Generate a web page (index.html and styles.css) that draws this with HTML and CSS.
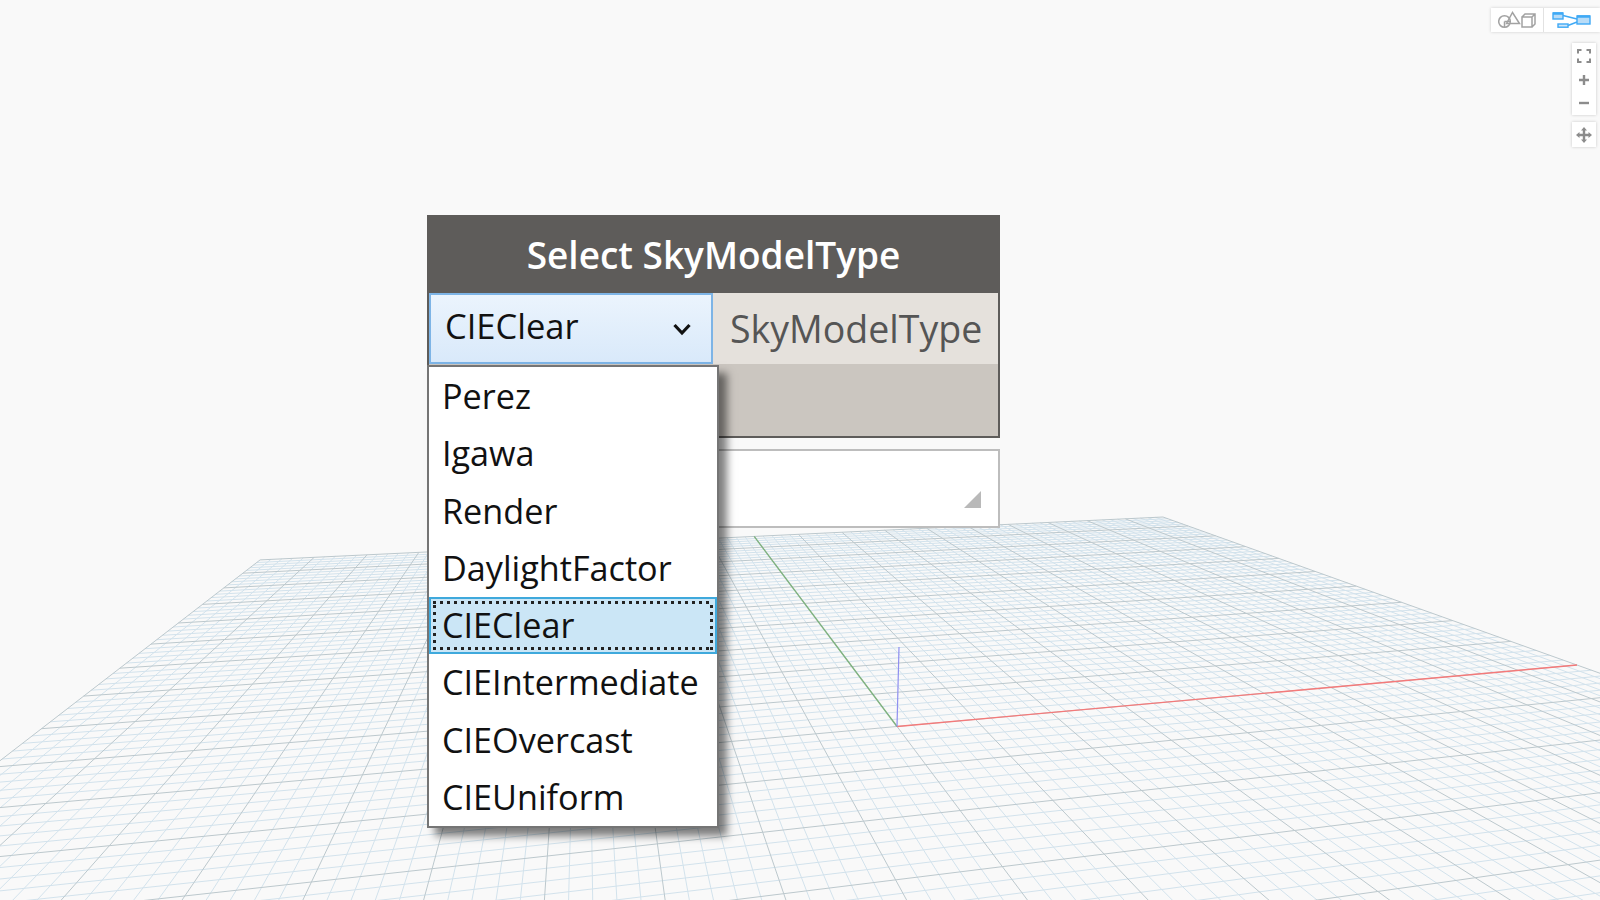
FILE: index.html
```html
<!DOCTYPE html>
<html lang="en">
<head>
  <meta charset="UTF-8">
  <meta name="viewport" content="width=device-width, initial-scale=1.0">
  <title>Select SkyModelType</title>
  <link rel="stylesheet" href="styles.css">
</head>
<body>
  <div class="viewport">
    <svg id="grid" class="grid" width="1600" height="900" viewBox="0 0 1600 900"></svg>

    <div class="node">
      <div class="node-title">Select SkyModelType</div>
      <div class="node-body">
        <div class="node-row">
          <div class="combo">
            <span>CIEClear</span>
            <svg class="chevron" width="18" height="14" viewBox="0 0 18 14">
              <path d="M1.5 3 L9 11 L16.5 3" fill="none" stroke="#111" stroke-width="3.2"/>
            </svg>
          </div>
          <div class="port">SkyModelType</div>
        </div>
        <div class="node-footer"></div>
      </div>
      <div class="preview">
        <span class="resize-grip"></span>
      </div>

      <ul class="dropdown">
        <li>Perez</li>
        <li>Igawa</li>
        <li>Render</li>
        <li>DaylightFactor</li>
        <li class="selected"><span class="focus-ring">CIEClear</span></li>
        <li>CIEIntermediate</li>
        <li>CIEOvercast</li>
        <li>CIEUniform</li>
      </ul>
    </div>

    <div class="view-switch">
      <button class="switch-btn">
        <svg width="38" height="20" viewBox="0 0 38 20" fill="none" stroke="#a2a2a2" stroke-width="1.5">
          <circle cx="6.5" cy="11.5" r="5.8"/>
          <path d="M6.5 11.5 H12.3 M6.5 11.5 V17.3"/>
          <path d="M8.5 13.5 L14.5 2.5 L21.5 13.5 Z"/>
          <path d="M24 7 H34 V17 H24 Z M24 7 L27 4 H37 V14 L34 17 M34 7 L37 4"/>
        </svg>
      </button>
      <button class="switch-btn active">
        <svg width="42" height="20" viewBox="0 0 42 20" fill="none" stroke="#3fa9f5" stroke-width="1.4">
          <path d="M12 5.5 L26 9 M17 15.5 L26 12"/>
          <rect x="2" y="3" width="10" height="6" fill="#b9dcf7"/>
          <rect x="7" y="14" width="10" height="3.2" fill="#cfe6f8"/>
          <rect x="26" y="6" width="13" height="8" fill="#b9dcf7"/>
          <path d="M2 3.5 H12 M26 6.5 H39" stroke-width="2.4"/>
        </svg>
      </button>
    </div>

    <div class="zoom-tools">
      <button class="tool-btn">
        <svg width="14" height="14" viewBox="0 0 14 14" fill="none" stroke="#8c8c8c" stroke-width="2">
          <path d="M1 4.5 V1 H4.5 M9.5 1 H13 V4.5 M13 9.5 V13 H9.5 M4.5 13 H1 V9.5"/>
        </svg>
      </button>
      <button class="tool-btn">
        <svg width="12" height="12" viewBox="0 0 12 12" stroke="#8c8c8c" stroke-width="2.4">
          <path d="M1 6 H11 M6 1 V11"/>
        </svg>
      </button>
      <button class="tool-btn">
        <svg width="12" height="12" viewBox="0 0 12 12" stroke="#8c8c8c" stroke-width="2.4">
          <path d="M1 6 H11"/>
        </svg>
      </button>
    </div>

    <button class="pan-tool">
      <svg width="16" height="16" viewBox="0 0 16 16" fill="#8c8c8c">
        <path d="M8 0 L11 3.5 H9.2 V6.8 H12.5 V5 L16 8 L12.5 11 V9.2 H9.2 V12.5 H11 L8 16 L5 12.5 H6.8 V9.2 H3.5 V11 L0 8 L3.5 5 V6.8 H6.8 V3.5 H5 Z"/>
      </svg>
    </button>
  </div>

  <script src="grid.js"></script>
</body>
</html>
```

FILE: styles.css
```css
/* General Styles */
body {
  margin: 0;
  padding: 0;
  background: #f9f9f9;
  font-family: "Open Sans", "Noto Sans", sans-serif;
}

.viewport {
  position: relative;
  width: 1600px;
  height: 900px;
  overflow: hidden;
}

.grid {
  position: absolute;
  left: 0;
  top: 0;
  filter: blur(0.35px);
}

/* Node */
.node {
  position: absolute;
  left: 427px;
  top: 215px;
  width: 573px;
}

.node-title {
  height: 78px;
  background: #5e5c5a;
  color: #ffffff;
  font-size: 37px;
  font-weight: 600;
  line-height: 79px;
  text-align: center;
}

.node-body {
  background: #cbc6c0;
  border: 2px solid #5e5c5a;
  border-top: none;
}

.node-row {
  display: flex;
  height: 71px;
  background: #e5e1dc;
}

.combo {
  box-sizing: border-box;
  display: flex;
  align-items: center;
  justify-content: space-between;
  width: 284px;
  padding: 0 20px 7px 14px;
  border: 2px solid #7db4e6;
  background: linear-gradient(#ebf4fd, #d9e9fa);
  color: #111111;
  font-size: 34.5px;
}

.chevron {
  margin-top: 7px;
}

.port {
  flex: 1;
  padding-left: 17px;
  color: #555555;
  font-size: 37.5px;
  line-height: 71px;
}

.node-footer {
  height: 72px;
}

.preview {
  position: relative;
  box-sizing: border-box;
  height: 79px;
  margin-top: 11px;
  background: #ffffff;
  border: 2px solid #bdbdbd;
}

.resize-grip {
  position: absolute;
  right: 17px;
  bottom: 18px;
  width: 0;
  height: 0;
  border-left: 17px solid transparent;
  border-bottom: 17px solid #b9b9b9;
}

/* Dropdown */
.dropdown {
  position: absolute;
  left: 0;
  top: 150px;
  box-sizing: border-box;
  width: 292px;
  margin: 0;
  padding: 1px 0 0;
  list-style: none;
  background: #ffffff;
  border: 2px solid #757575;
  box-shadow: 8px 8px 8px rgba(0, 0, 0, 0.5);
  color: #111111;
  font-size: 34.2px;
}

.dropdown li {
  box-sizing: border-box;
  height: 57.3px;
  padding-left: 13px;
  line-height: 56px;
}

.dropdown .selected {
  padding: 2px;
  background: #cbe6f6;
  border: 2px solid #3fa9dc;
  line-height: 41px;
}

/* Dots drawn by hand, a dotted border packs them too tight */
.focus-ring {
  display: block;
  height: 100%;
  box-sizing: border-box;
  padding: 3px 3px 3px 9px;
  background-image:
    repeating-linear-gradient(90deg, #222222 0 3px, transparent 3px 7px),
    repeating-linear-gradient(90deg, #222222 0 3px, transparent 3px 7px),
    repeating-linear-gradient(0deg, #222222 0 3px, transparent 3px 7px),
    repeating-linear-gradient(0deg, #222222 0 3px, transparent 3px 7px);
  background-size: 100% 3px, 100% 3px, 3px 100%, 3px 100%;
  background-position: top, bottom, left, right;
  background-repeat: no-repeat;
}

/* View controls */
button {
  display: flex;
  align-items: center;
  justify-content: center;
  padding: 0;
  border: none;
  background: transparent;
}

.view-switch {
  position: absolute;
  top: 8px;
  right: 0;
  display: flex;
  width: 109px;
  height: 24px;
  background: #ffffff;
  box-shadow: 0 0 3px rgba(0, 0, 0, 0.18);
}

.switch-btn {
  flex: 1;
}

.switch-btn.active {
  flex: none;
  box-sizing: border-box;
  width: 57px;
  border-left: 1px solid #e2e2e2;
}

.zoom-tools {
  position: absolute;
  top: 43px;
  right: 4px;
  box-sizing: border-box;
  display: flex;
  flex-direction: column;
  width: 24px;
  height: 72px;
  padding-top: 1px;
  background: #ffffff;
  box-shadow: 0 0 3px rgba(0, 0, 0, 0.2);
}

.tool-btn {
  flex: 1;
}

.pan-tool {
  position: absolute;
  top: 122px;
  right: 4px;
  width: 24px;
  height: 25px;
  background: #ffffff;
  box-shadow: 0 0 3px rgba(0, 0, 0, 0.2);
}
```

FILE: grid.js
```js
// Draws the ground grid and the axes in perspective
const svg = document.getElementById('grid');

// (u, v) is in -1..1 on the plane, origin at the centre
function project(u, v) {
  const w = 0.1736 * u + 0.839 * v + 1;
  return [
    (953.8 * u + 489.9 * v + 897) / w,
    (54 * u + 260 * v + 726.5) / w
  ];
}

function addLine(a, b, color, width) {
  const line = document.createElementNS('http://www.w3.org/2000/svg', 'line');
  line.setAttribute('x1', a[0].toFixed(1));
  line.setAttribute('y1', a[1].toFixed(1));
  line.setAttribute('x2', b[0].toFixed(1));
  line.setAttribute('y2', b[1].toFixed(1));
  line.setAttribute('stroke', color);
  line.setAttribute('stroke-width', width);
  svg.appendChild(line);
}

// Lowest v on screen is well under the window, no need to go to -1
const vMin = -0.6;
const cells = 50;

function drawSet(major) {
  for (let i = -cells; i <= cells; i++) {
    if ((i % 5 === 0) !== major) continue;
    const t = i / cells;
    const color = major ? '#bcc8cd' : '#d2e2ec';
    addLine(project(t, vMin), project(t, 1), color, 1);
    if (t >= vMin) addLine(project(-1, t), project(1, t), color, 1);
  }
}

drawSet(false);
drawSet(true);

addLine(project(0, 0), project(1, 0), '#f47a7a', 1.4);
addLine(project(0, 0), project(0, 1), '#7fb27f', 1.4);
addLine([897, 726.5], [899, 647], '#8f8ff0', 1.2);
```
